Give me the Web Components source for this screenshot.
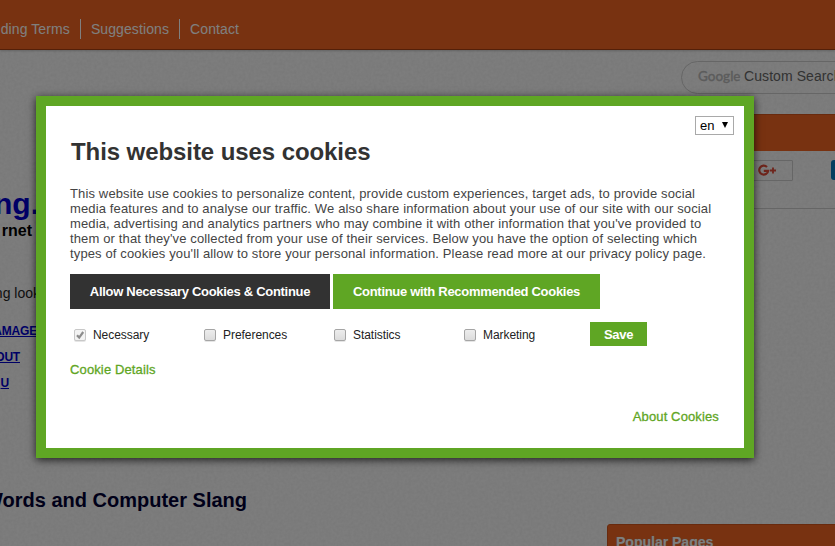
<!DOCTYPE html>
<html lang="en">
<head>
<meta charset="utf-8">
<title>Cookies</title>
<style>
  html, body { margin: 0; height: 100%; overflow: hidden; }
  body {
    position: relative;
    background: #fafafa;
    font-family: "Liberation Sans", Arial, sans-serif;
  }
</style>
</head>
<body>
<site-page></site-page>
<cookie-dialog heading="This website uses cookies"></cookie-dialog>

<script>
class SiteNav extends HTMLElement {
  connectedCallback() {
    this.attachShadow({ mode: "open" });
    this.shadowRoot.innerHTML = `
      <style>
        :host { display: block; height: 49px; background: #f06522; border-bottom: 1px solid #a84012; box-shadow: 0 1px 2px rgba(0,0,0,.2); }
        nav { display: flex; justify-content: flex-end; width: 249px; padding-top: 19px; }
        a { flex: none; padding: 0 10px; height: 20px; line-height: 20px; font-size: 14px; letter-spacing: .1px; color: #fff; }
        a + a { border-left: 1px solid #fff; }
      </style>
      <nav><a>nding Terms</a><a>Suggestions</a><a>Contact</a></nav>
    `;
  }
}

/* one line of text, aligned to the right edge of --w */
class TextLine extends HTMLElement {
  connectedCallback() {
    this.attachShadow({ mode: "open" });
    this.shadowRoot.innerHTML = `
      <style>
        :host { display: flex; justify-content: flex-end; width: var(--w); white-space: nowrap; }
        span { flex: none; }
      </style>
      <span><slot></slot></span>
    `;
  }
}

class SearchBox extends HTMLElement {
  connectedCallback() {
    this.attachShadow({ mode: "open" });
    this.shadowRoot.innerHTML = `
      <style>
        :host { display: flex; align-items: center; box-sizing: border-box; width: 260px; height: 33px; padding: 0 0 3px 16px; border: 1px solid #ccc; border-radius: 17px; white-space: nowrap; }
        b { font: 500 13.5px Lato, sans-serif; color: #b8b8b8; -webkit-text-stroke: .3px #b8b8b8; margin-right: 3px; width: 43px; }
        span { font-size: 14px; color: #666; letter-spacing: .08px; }
      </style>
      <b>Google</b><span>Custom Search</span>
    `;
  }
}

class SideBar extends HTMLElement {
  connectedCallback() {
    this.attachShadow({ mode: "open" });
    this.shadowRoot.innerHTML = `
      <style>
        :host { display: block; }
        search-box { margin: 11px 0 0 74px; }
        .bar { margin-top: 20px; height: 37px; background: #f06522; border-top: 1px solid #d0551c; box-sizing: border-box; }
        .share { display: flex; gap: 38px; margin-top: 9px; padding-left: 129px; height: 48px; border-bottom: 1px solid #ccc; }
        .plus { box-sizing: border-box; width: 57px; height: 21px; border: 1px solid #ccc; border-radius: 1px; padding: 3px 0 0 21px; }
        .blue { flex: none; width: 40px; height: 20px; border-radius: 3px; background: #0a7cc0; }
        svg { display: block; }
        .popular { margin-top: 315px; height: 40px; padding: 7px 8px; background: #f06522; border: 1px solid #d0551c; border-radius: 3px; box-sizing: border-box; font: bold 14px/20px "Liberation Sans", Arial, sans-serif; color: #fff; text-shadow: 0 0 1px #999; }
      </style>
      <search-box></search-box>
      <div class="bar"></div>
      <div class="share">
        <div class="plus"><svg width="19" height="13" viewBox="0 0 19 13" fill="none" stroke="#dd4b39" stroke-width="2.2"><path d="M9 3A4.5 4.5 0 1 0 10.2 6.8H5.8"/><path d="M12 6.5h6M15 3.5v6" stroke-width="1.8"/></svg></div>
        <div class="blue"></div>
      </div>
      <div class="popular">Popular Pages</div>
    `;
  }
}

class SitePage extends HTMLElement {
  connectedCallback() {
    this.attachShadow({ mode: "open" });
    this.shadowRoot.innerHTML = `
      <style>
        :host { display: grid; height: 546px; overflow: hidden; background: #fafafa; }
        .grain, .page { grid-area: 1 / 1; min-width: 0; }
        .grain { width: 100%; height: 546px; }
        main { display: grid; grid-template-columns: 607px 1fr; }
        .left { padding-top: 136px; overflow: hidden; }
        .site { --w: 39px; height: 35px; font: bold 30px/36px "Liberation Sans", Arial, sans-serif; color: #0000cc; }
        .sub { --w: 32px; height: 18px; font: bold 16px/18px "Liberation Sans", Arial, sans-serif; color: #000; margin-top: 1px; }
        .look { --w: 40px; height: 18px; margin-top: 44px; font-size: 14px; line-height: 18px; color: #222; }
        .link { height: 14px; margin-top: 12px; font-size: 12px; font-weight: bold; line-height: 14px; color: #0000cc; letter-spacing: -.2px; }
        .link.first { margin-top: 22px; }
        .words { --w: 247px; margin-top: 98px; font: bold 20px/24px "Liberation Sans", Arial, sans-serif; color: #000033; }
      </style>
      <svg class="grain">
        <filter id="grain" x="0" y="0" width="100%" height="100%">
          <feTurbulence type="fractalNoise" baseFrequency=".35" numOctaves="2" seed="4"/>
          <feColorMatrix values="0 0 0 0 .4  0 0 0 0 .4  0 0 0 0 .4  .2 0 0 0 -.06"/>
        </filter>
        <rect width="100%" height="100%" filter="url(#grain)"/>
      </svg>
      <div class="page">
        <site-nav></site-nav>
        <main>
          <div class="left">
            <text-line class="site">ng.</text-line>
            <text-line class="sub">rnet</text-line>
            <text-line class="look">ng look</text-line>
            <text-line class="link first" style="--w:37px"><u>AMAGE</u></text-line>
            <text-line class="link" style="--w:20px"><u>OUT</u></text-line>
            <text-line class="link" style="--w:9px"><u>U</u></text-line>
            <text-line class="words">Words and Computer Slang</text-line>
          </div>
          <side-bar></side-bar>
        </main>
      </div>
    `;
  }
}

class CookieButton extends HTMLElement {
  connectedCallback() {
    this.attachShadow({ mode: "open" });
    this.shadowRoot.innerHTML = `
      <style>
        :host { display: flex; align-items: center; justify-content: center; background: #5fa624; color: #fff; font-weight: bold; letter-spacing: -.3px; white-space: nowrap; cursor: pointer; }
        :host([dark]) { background: #323232; }
      </style>
      <slot></slot>
    `;
  }
}

class CookieOption extends HTMLElement {
  connectedCallback() {
    this.attachShadow({ mode: "open" });
    const tick = this.hasAttribute("checked")
      ? `<path d="M3 6.2L5.2 8.6L9.2 3" fill="none" stroke="#8c8c8c" stroke-width="2.2"/>` : "";
    this.shadowRoot.innerHTML = `
      <style>
        :host { display: flex; align-items: center; width: 130px; box-sizing: border-box; padding-left: 4px; gap: 7px; font-size: 12px; color: #222; letter-spacing: -.05px; }
        .box { width: 10px; height: 10px; border: 1px solid #a5a5a5; border-radius: 2px; background: linear-gradient(#ededed, #dcdcdc); box-shadow: 0 1px 0 rgba(0,0,0,.1); }
        :host([checked]) .box { border-color: #c8c8c8; background: #f3f3f3; }
        svg { display: block; margin: -1px; }
      </style>
      <div class="box"><svg width="12" height="12">${tick}</svg></div><span><slot></slot></span>
    `;
  }
}

class CookieDialog extends HTMLElement {
  connectedCallback() {
    this.attachShadow({ mode: "open" });
    this.shadowRoot.innerHTML = `
      <style>
        :host { position: absolute; inset: 0; background: rgba(0,0,0,.5); padding: 96px 0 0 36px; }
        .dialog { box-sizing: border-box; width: 718px; height: 362px; border: 10px solid #5fa624; background: #fff; box-shadow: 0 2px 8px rgba(0,0,0,.75); padding: 10px 10px 0 24px; display: flex; flex-direction: column; }
        .lang { align-self: flex-end; box-sizing: border-box; width: 39px; height: 19px; border: 1px solid #a9a9a9; display: flex; align-items: center; justify-content: space-between; padding: 0 5px 0 4px; font-size: 13px; color: #000; }
        .lang i { border: 3.5px solid transparent; border-top: 6px solid #000; border-bottom: 0; margin-top: -1px; }
        h1 { margin: 3px 0 0 1px; height: 28px; font-size: 24px; line-height: 28px; letter-spacing: -.08px; color: #323232; }
        p { margin: 20px 0 0; font-size: 13px; line-height: 15px; color: #444; white-space: nowrap; letter-spacing: .137px; }
        .buttons { display: flex; gap: 3px; margin-top: 13px; font-size: 13px; }
        .buttons cookie-button { width: 260px; height: 35px; }
        .buttons cookie-button + cookie-button { width: 267px; }
        .options { display: flex; height: 24px; margin-top: 13px; }
        .options cookie-option { height: 25px; }
        .save { width: 57px; height: 24px; font-size: 13px; }
        a { color: #5fa624; font-size: 13px; line-height: 16px; letter-spacing: .13px; -webkit-text-stroke: .3px #5fa624; }
        .details { margin-top: 16px; }
        .about { align-self: flex-end; margin: 31px 15px 0 0; }
      </style>
      <div class="dialog">
        <div class="lang">en<i></i></div>
        <h1>${this.getAttribute("heading")}</h1>
        <p>
          This website use cookies to personalize content, provide custom experiences, target ads, to provide social<br>
          media features and to analyse our traffic. We also share information about your use of our site with our social<br>
          media, advertising and analytics partners who may combine it with other information that you've provided to<br>
          them or that they've collected from your use of their services. Below you have the option of selecting which<br>
          types of cookies you'll allow to store your personal information. Please read more at our privacy policy page.
        </p>
        <div class="buttons">
          <cookie-button dark>Allow Necessary Cookies &amp; Continue</cookie-button>
          <cookie-button>Continue with Recommended Cookies</cookie-button>
        </div>
        <div class="options">
          <cookie-option checked>Necessary</cookie-option>
          <cookie-option>Preferences</cookie-option>
          <cookie-option>Statistics</cookie-option>
          <cookie-option>Marketing</cookie-option>
          <cookie-button class="save">Save</cookie-button>
        </div>
        <a class="details">Cookie Details</a>
        <a class="about">About Cookies</a>
      </div>
    `;
  }
}

customElements.define("site-nav", SiteNav);
customElements.define("text-line", TextLine);
customElements.define("search-box", SearchBox);
customElements.define("side-bar", SideBar);
customElements.define("site-page", SitePage);
customElements.define("cookie-button", CookieButton);
customElements.define("cookie-option", CookieOption);
customElements.define("cookie-dialog", CookieDialog);
</script>
</body>
</html>
